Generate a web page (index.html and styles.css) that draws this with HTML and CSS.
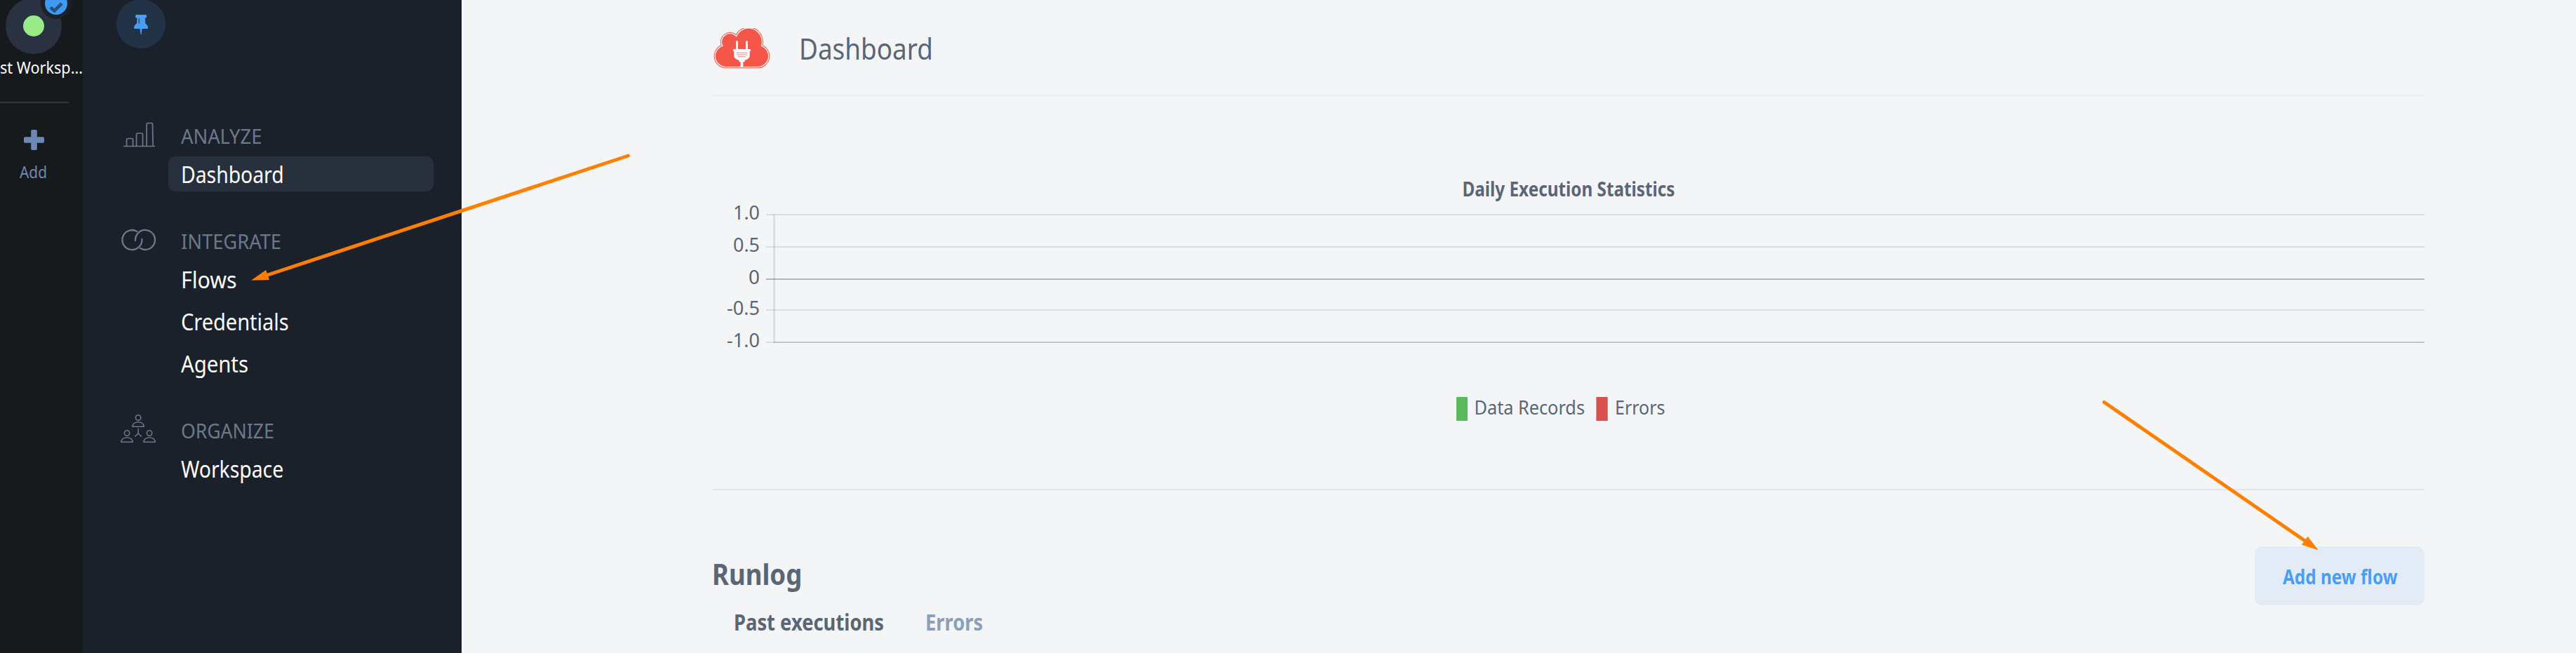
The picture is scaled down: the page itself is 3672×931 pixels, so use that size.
FILE: index.html
```html
<!DOCTYPE html>
<html lang="en">
<head>
<meta charset="utf-8">
<title>Dashboard</title>
<link rel="stylesheet" href="styles.css">
</head>
<body>
<div class="app">
  <aside class="rail">
    <div class="avatar">
      <span class="avatar-dot"></span>
      <span class="badge"><svg width="20" height="16" viewBox="0 0 20 16"><path d="M2 8.5 7.5 13.5 18 3" fill="none" stroke="#275283" stroke-width="4.6"/></svg></span>
    </div>
    <div class="workspace-name"><span class="t t-ws">st Worksp...</span></div>
    <div class="rail-divider"></div>
    <div class="add">
      <svg width="29" height="29" viewBox="0 0 29 29" fill="#6d88b3"><rect x="10.2" y="0" width="8.6" height="29" rx="1.8"/><rect x="0" y="10.2" width="29" height="8.6" rx="1.8"/></svg>
      <span class="t t-add">Add</span>
    </div>
  </aside>

  <aside class="sidebar">
    <div class="pin">
      <svg width="20" height="28" viewBox="0 0 20 28" fill="#489ef5"><path d="M3.5 0H16.500Q18 0 18 1.500V3Q18 4.500 16.500 4.500H15.800L16.200 12.500Q20 14.500 20 19Q20 20 19 20H1Q0 20 0 19Q0 14.500 4 12.500L4.400 4.500H3.500Q2 4.500 2 3V1.500Q2 0 3.500 0Z"/><path d="M8.500 20H11.500L10.500 28H9.500Z"/><path d="M7.200 5V12.500" stroke="#27466b" stroke-width="1.300"/></svg>
    </div>
    <nav class="nav">
      <section class="group">
        <div class="heading">
          <svg class="nav-icon" width="50" height="42" viewBox="0 0 50 42" fill="none" stroke="#6d788b" stroke-width="1.700"><path d="M4 37.500H49"/><path d="M8.500 37V28Q8.500 26.500 10 26.500H16Q17.500 26.500 17.500 28V37M22.500 37V20.500Q22.500 19 24 19H30Q31.500 19 31.500 20.500V37M37 37V6Q37 4.500 38.500 4.500H44Q45.500 4.500 45.500 6L46 37"/></svg>
          <span class="t t-analyze">ANALYZE</span>
        </div>
        <ul class="items"><li class="item active"><span class="t t-dash">Dashboard</span></li></ul>
      </section>
      <section class="group">
        <div class="heading">
          <svg class="nav-icon" width="50" height="42" viewBox="0 0 50 42" fill="none" stroke="#6d788b" stroke-width="2.300"><path d="M23.300 7.900A14 14 0 1 0 30.300 19" stroke-linecap="round"/><path d="M21 21A14 14 0 1 1 28 32.100" stroke-linecap="round"/></svg>
          <span class="t t-integrate">INTEGRATE</span>
        </div>
        <ul class="items">
          <li class="item"><span class="t t-flows">Flows</span></li>
          <li class="item"><span class="t t-cred">Credentials</span></li>
          <li class="item"><span class="t t-agents">Agents</span></li>
        </ul>
      </section>
      <section class="group">
        <div class="heading">
          <svg class="nav-icon" width="50" height="42" viewBox="0 0 50 42" fill="none" stroke="#6d788b" stroke-width="1.600">
            <g id="person"><circle cx="25" cy="4.500" r="3.700"/><path d="M17 17.200V16.500C18 8.800 32 8.800 33 16.500V17.200Z"/></g>
            <use href="#person" x="-16" y="22"/><use href="#person" x="16" y="22"/>
            <path d="M25 20V27L20.200 31.500M25 27L29.800 31.500"/>
          </svg>
          <span class="t t-organize">ORGANIZE</span>
        </div>
        <ul class="items"><li class="item"><span class="t t-work">Workspace</span></li></ul>
      </section>
    </nav>
  </aside>

  <main class="main">
    <header class="page-head">
      <svg class="logo" width="82" height="60" viewBox="81 60 246 180">
        <path d="M135 224A44 44 0 0 1 124 137.400A33 33 0 0 1 180 101A54 56 0 0 1 283 138A44 44 0 0 1 270 224Z" fill="none" stroke="#ee5646" stroke-width="16"/>
        <path d="M135 224A44 44 0 0 1 124 137.400A33 33 0 0 1 180 101A54 56 0 0 1 283 138A44 44 0 0 1 270 224Z" fill="#f5564a" stroke="#fff" stroke-width="10"/>
        <path d="M135 224A44 44 0 0 1 124 137.400A33 33 0 0 1 180 101A54 56 0 0 1 283 138A44 44 0 0 1 270 224Z" fill="#f5564a" stroke="#f5564a" stroke-width="3"/>
        <path d="M177 119Q177 115 181.500 115Q186 115 186 119V150H219V119Q219 115 223.500 115Q228 115 228 119V150H240V159H236V178Q236 190 224 194L215 198V205H208V226H197V205H191V198L181 194Q169 190 169 178V159H165V150H177Z" fill="#fff"/>
        <path d="M180 166H225M180 174H225M186 182H219" stroke="#f48b83" stroke-width="3"/>
      </svg>
      <h1 class="page-title"><span class="t t-title">Dashboard</span></h1>
    </header>

    <section class="chart">
      <svg width="2440" height="560" viewBox="1016 137 2440 560">
        <g class="grid-lines">
          <path d="M1092 306H3456M1092 352H3456M1092 442H3456M1092 488H1103"/>
          <path class="grid-zero" d="M1092 398H3456"/>
          <path class="grid-base" d="M1103 488H3456"/>
          <path class="grid-axis" d="M1103.500 305V489"/>
        </g>
        <g class="chart-text">
          <text class="chart-title" x="2084.500" y="279.500" textLength="303" lengthAdjust="spacingAndGlyphs">Daily Execution Statistics</text>
          <text x="1045" y="312.500" textLength="38" lengthAdjust="spacingAndGlyphs">1.0</text>
          <text x="1045" y="358.500" textLength="38" lengthAdjust="spacingAndGlyphs">0.5</text>
          <text x="1067" y="404.500" textLength="16" lengthAdjust="spacingAndGlyphs">0</text>
          <text x="1036" y="448.500" textLength="47" lengthAdjust="spacingAndGlyphs">-0.5</text>
          <text x="1036" y="494.500" textLength="47" lengthAdjust="spacingAndGlyphs">-1.0</text>
          <text x="2101.500" y="590.500" textLength="157.500" lengthAdjust="spacingAndGlyphs">Data Records</text>
          <text x="2302" y="590.500" textLength="71.500" lengthAdjust="spacingAndGlyphs">Errors</text>
        </g>
        <rect x="2076" y="566" width="16" height="34" fill="#5cb85c"/>
        <rect x="2275.400" y="566" width="16.300" height="34" fill="#d9504c"/>
      </svg>
    </section>

    <section class="runlog">
      <div class="runlog-head">
        <h2 class="runlog-title"><span class="t t-runlog">Runlog</span></h2>
        <button class="add-flow"><span class="t t-addflow">Add new flow</span></button>
      </div>
      <div class="tabs">
        <span class="tab tab-active"><span class="t t-past">Past executions</span></span>
        <span class="tab"><span class="t t-errors">Errors</span></span>
      </div>
    </section>
  </main>

  <svg class="arrows" width="3672" height="931" viewBox="0 0 3672 931" fill="#ff8000" stroke="#ff8000">
    <path d="M895.500 222 380 392.500M2999.500 573.500 3287 772" stroke-width="5" stroke-linecap="round"/>
    <path d="M358 399.700 379 385 384 399ZM3305 784.500 3281 776.700 3289.500 764.700Z" stroke="none"/>
  </svg>
</div>
</body>
</html>
```
FILE: styles.css
```css
* { box-sizing: border-box; }
body {
  margin: 0;
  font-family: "Noto Sans", "Open Sans", sans-serif;
  background: #f3f5f7;
  color: #5a6575;
}
h1, h2, ul { margin: 0; padding: 0; font-weight: 400; }
.app {
  position: relative;
  display: grid;
  grid-template-columns: 118px 540px 1fr;
  height: 931px;
  overflow: hidden;
}

/* Condensed text: each label narrows from its left edge */
.t {
  display: inline-block;
  white-space: nowrap;
  transform: scaleX(.87);
  transform-origin: left center;
}
.t-ws { transform: scaleX(.92); }
.t-analyze, .t-integrate { transform: scaleX(.925); }
.t-organize { transform: scaleX(.9); }
.t-dash, .t-work { transform: scaleX(.885); }
.t-flows { transform: scaleX(.945); }
.t-cred { transform: scaleX(.905); }
.t-agents { transform: scaleX(.915); }
.t-title { transform: scaleX(.878); }
.t-past { transform: scaleX(.855); }
.t-errors { transform: scaleX(.855); }

/* Workspace rail */
.rail { background: #171a1c; height: 931px; overflow: hidden; }
.avatar {
  position: relative;
  display: flex;
  align-items: center;
  justify-content: center;
  width: 80px;
  height: 80px;
  margin: -3px 0 0 8px;
  border-radius: 50%;
  background: #2a3241;
}
.avatar-dot { width: 30px; height: 30px; border-radius: 50%; background: #98eb87; }
.badge {
  position: absolute;
  left: 50px;
  top: -14px;
  display: flex;
  align-items: center;
  justify-content: center;
  width: 44px;
  height: 44px;
  border: 6px solid #1b2029;
  border-radius: 50%;
  background: #4299f0;
}
.badge svg { margin-top: 9px; }
.workspace-name { height: 38px; line-height: 38px; font-size: 23.500px; color: #fff; }
.rail-divider { width: 98px; height: 2px; margin-top: 30px; background: #2d3647; }
.add {
  display: flex;
  flex-direction: column;
  gap: 13px;
  margin: 38px 0 0 28px;
  font-size: 24px;
  line-height: 36px;
  color: #6d88b3;
}
.add svg { margin-left: 6px; }

/* Navigation sidebar */
.sidebar { background: #1b212b; height: 931px; overflow: hidden; }
.pin {
  display: flex;
  align-items: center;
  justify-content: center;
  width: 70px;
  height: 70px;
  margin: -1px 0 0 48px;
  padding-top: 2px;
  border-radius: 50%;
  background: #233347;
}
.nav { display: flex; flex-direction: column; gap: 45px; padding: 99px 40px 0 54px; }
.heading {
  display: flex;
  height: 50px;
  line-height: 51px;
  font-size: 29.500px;
  color: #6d788b;
}
.nav-icon { flex: none; margin-right: 36px; margin-top: 3px; }
.group:nth-child(2) .nav-icon { margin-top: 4px; }
.items {
  display: flex;
  flex-direction: column;
  gap: 10px;
  margin: 5px 0 0 68px;
  list-style: none;
}
.item {
  height: 50px;
  padding-left: 17.500px;
  line-height: 51px;
  font-size: 32px;
  color: #fff;
  border-radius: 10px;
}
.active { background: #27303c; }

/* Main column */
.main { width: 2440px; margin-left: 358px; }
.page-head {
  display: flex;
  height: 137px;
  border-bottom: 2px solid #e9ebed;
}
.logo { flex: none; margin: 40px 40px 0 1px; }
.page-title { height: 60px; margin-top: 39px; line-height: 60px; font-size: 42px; }
.chart { height: 562px; border-bottom: 2px solid #e3e5e8; }
.chart svg { display: block; }
.chart-text { font-size: 28px; fill: #5a6575; }
.chart-title { font-weight: 700; }
.grid-lines { fill: none; stroke: #dadcde; stroke-width: 2; }
.grid-zero { stroke: #b3b6b9; }
.grid-base { stroke: #c3c5c8; }
.grid-axis { stroke: rgba(0, 0, 0, .1); stroke-width: 2.500; }

.runlog-head {
  display: flex;
  justify-content: space-between;
  height: 84px;
  margin-top: 80px;
}
.runlog-title { line-height: 78px; font-size: 42px; font-weight: 700; margin-left: -1.500px; }
.add-flow {
  width: 242px;
  height: 84px;
  padding: 2px 0 0 40px;
  border: 0;
  border-radius: 10px;
  background: #e3ebf7;
  color: #489ef5;
  font: 700 28px "Noto Sans", sans-serif;
  text-align: left;
}
.tabs { display: grid; grid-template-columns: 273px auto; height: 46px; padding-left: 29.500px; }
.tab { line-height: 48px; font-size: 32px; font-weight: 700; color: #8b9fba; }
.tab-active { color: #5a6575; }

/* Annotation arrows over the page */
.arrows { position: absolute; left: 0; top: 0; pointer-events: none; }
```
